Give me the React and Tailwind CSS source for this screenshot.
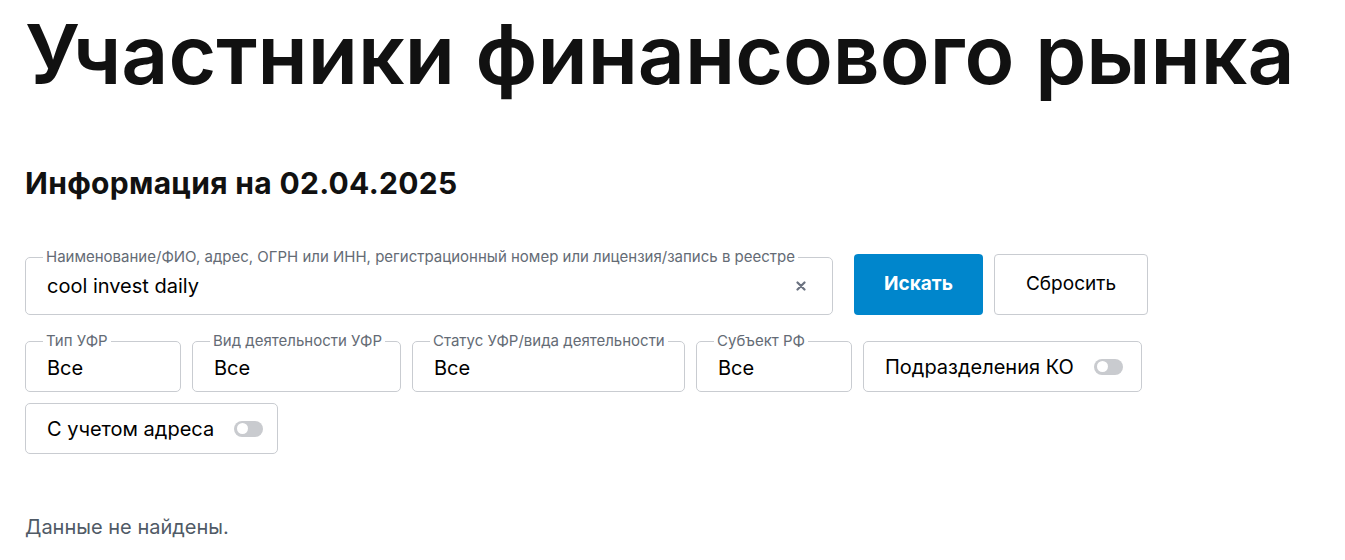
import React from "react";

const font = { fontFamily: "Inter, 'Noto Sans', sans-serif" };

const Toggle = () => (
  <span className="relative inline-flex h-[16px] w-[29px] shrink-0 items-center rounded-full bg-[#c9cbcf]">
    <span className="absolute left-[3px] h-[11px] w-[11px] rounded-full bg-white" />
  </span>
);

const Select = ({ label, value = "Все", width }) => (
  <fieldset className={`${width} h-[60px] rounded-[5px] border border-[#c9ccd1] pl-[17px] pr-[10px]`}>
    <legend className="whitespace-nowrap px-[3px] text-[15px] leading-[18px] text-[#646b75]">{label}</legend>
    <div className="pl-[4px] pt-[6px] text-[20px] leading-[24px] text-black">{value}</div>
  </fieldset>
);

const SwitchBox = ({ label, width }) => (
  <div className={`${width} flex h-[51px] items-center gap-[20px] rounded-[5px] border border-[#c9ccd1] pl-[21px]`}>
    <span className="text-[20px] leading-[24px] text-black">{label}</span>
    <Toggle />
  </div>
);

export default function App() {
  return (
    <div className="min-h-screen bg-white px-[25px] text-[#111]" style={font}>
      <h1 className="pt-[14px] text-[82px] font-semibold leading-none text-[#111]">
        Участники финансового рынка
      </h1>

      <h2 className="mt-[69px] text-[30px] font-bold leading-[36px] tracking-[0.3px] text-[#111]">
        Информация на 02.04.2025
      </h2>

      <div className="mt-[47px] flex items-end">
        <fieldset className="h-[67px] w-[808px] rounded-[5px] border border-[#c9ccd1] px-[17px]">
          <legend className="whitespace-nowrap px-[3px] text-[15px] leading-[18px] text-[#646b75]">
            Наименование/ФИО, адрес, ОГРН или ИНН, регистрационный номер или лицензия/запись в реестре
          </legend>
          <div className="flex items-center justify-between pl-[4px] pr-[4px] pt-[8px]">
            <span className="text-[20px] leading-[24px] text-black">cool invest daily</span>
            <svg width="10" height="10" viewBox="0 0 10 10" className="mr-[5px]">
              <path d="M1.5 1.5 L8.5 8.5 M8.5 1.5 L1.5 8.5" stroke="#6b7280" strokeWidth="2.2" strokeLinecap="round" />
            </svg>
          </div>
        </fieldset>
        <button className="ml-[21px] h-[61px] w-[129px] rounded-[4px] bg-[#0086cc] text-[19px] font-bold text-white">
          Искать
        </button>
        <button className="ml-[11px] h-[61px] w-[154px] rounded-[4px] border border-[#c9ccd1] bg-white text-[19px] text-black">
          Сбросить
        </button>
      </div>

      <div className="mt-[17px] flex items-end gap-[11px]">
        <Select label="Тип УФР" width="w-[156px]" />
        <Select label="Вид деятельности УФР" width="w-[209px]" />
        <Select label="Статус УФР/вида деятельности" width="w-[273px]" />
        <Select label="Субъект РФ" width="w-[156px]" />
        <SwitchBox label="Подразделения КО" width="w-[279px]" />
      </div>
      <div className="mt-[11px] flex">
        <SwitchBox label="С учетом адреса" width="w-[253px]" />
      </div>

      <p className="mt-[61px] text-[20px] leading-[24px] text-[#505a66]">Данные не найдены.</p>
    </div>
  );
}
